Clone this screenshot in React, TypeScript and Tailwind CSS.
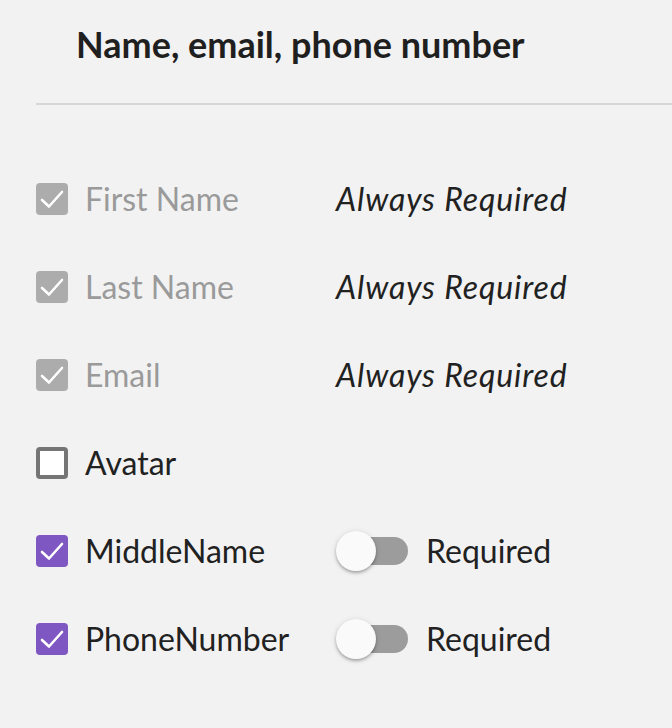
type Field = {
    label: string;
    state: "locked" | "off" | "on";
};

const fields: Field[] = [
    { label: "First Name", state: "locked" },
    { label: "Last Name", state: "locked" },
    { label: "Email", state: "locked" },
    { label: "Avatar", state: "off" },
    { label: "MiddleName", state: "on" },
    { label: "PhoneNumber", state: "on" },
];

function Check({ state }: { state: Field["state"] }) {
    if (state === "off") {
        return <span className="block size-8 shrink-0 rounded-[4px] border-4 border-[#757575] bg-white" />;
    }
    return (
        <span
            className={`flex size-8 shrink-0 items-center justify-center rounded-[4px] ${
                state === "locked" ? "bg-[#acacac]" : "bg-[#7e57c2]"
            }`}
        >
            <svg viewBox="0 0 32 32" className="size-8" fill="none">
                <polyline
                    points="6,17 13,23.5 26,9"
                    stroke="white"
                    strokeWidth="2.6"
                    strokeLinecap="round"
                    strokeLinejoin="round"
                />
            </svg>
        </span>
    );
}

function Toggle() {
    return (
        <span className="relative flex h-10 w-[72px] shrink-0 items-center">
            <span className="ml-[4px] h-[28px] w-[68px] rounded-full bg-[#9c9c9c]" />
            <span className="absolute left-0 top-0 size-10 rounded-full bg-[#fafafa] shadow-[0_2px_3px_rgba(0,0,0,0.25),0_1px_6px_rgba(0,0,0,0.12)]" />
        </span>
    );
}

export default function App() {
    return (
        <div className="h-[728px] w-full overflow-hidden bg-[#f2f2f2] font-['Lato',sans-serif] text-[#212121]">
            <h1 className="pl-[76px] pt-[23px] text-[36px] font-bold leading-[1.2] text-[#1f1f1f]">
                Name, email, phone number
            </h1>
            <div className="ml-[36px] mt-[37px] h-[2px] bg-[#d6d6d6]" />

            <ul className="mt-[50px] flex flex-col">
                {fields.map((f) => (
                    <li key={f.label} className="flex h-[88px] items-center pl-[36px]">
                        <div className="flex w-[300px] items-center gap-[17px]">
                            <Check state={f.state} />
                            <span
                                className={`text-[32px] leading-[1.2] ${
                                    f.state === "locked" ? "text-[#9a9a9a]" : "text-[#212121]"
                                }`}
                            >
                                {f.label}
                            </span>
                        </div>
                        {f.state === "locked" && (
                            <span className="text-[32px] italic leading-[1.2] tracking-[0.9px]">Always Required</span>
                        )}
                        {f.state === "on" && (
                            <div className="flex items-center gap-[18px]">
                                <Toggle />
                                <span className="text-[32px] leading-[1.2]">Required</span>
                            </div>
                        )}
                    </li>
                ))}
            </ul>
        </div>
    );
}
